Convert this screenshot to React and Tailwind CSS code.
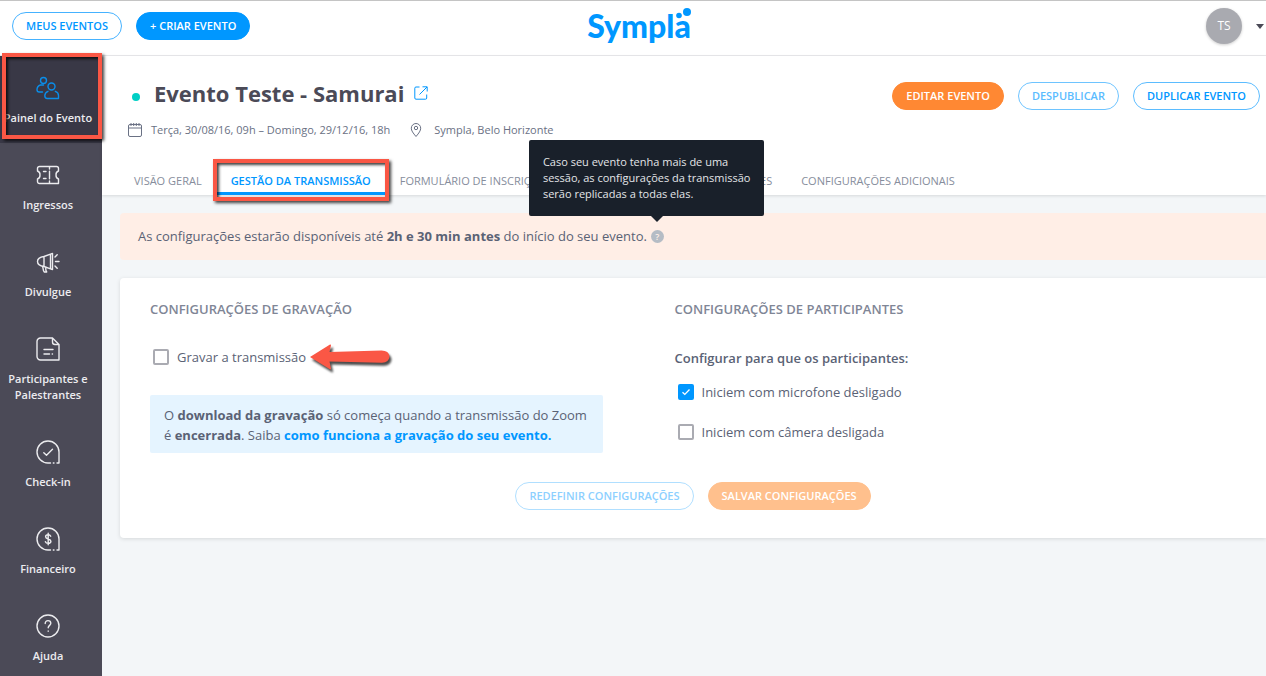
import React, { useState } from 'react';

const navItems = [
  { label: 'Painel do Evento', icon: PeopleIcon, active: true },
  { label: 'Ingressos', icon: TicketIcon },
  { label: 'Divulgue', icon: MegaphoneIcon },
  { label: 'Participantes e Palestrantes', icon: NoteIcon },
  { label: 'Check-in', icon: CheckinIcon },
  { label: 'Financeiro', icon: MoneyIcon },
  { label: 'Ajuda', icon: HelpIcon },
];

function NavSvg({ children }) {
  return (
    <svg width="24" height="24" viewBox="0 0 24 24" fill="none" stroke="currentColor" strokeWidth="1.4" strokeLinecap="round" strokeLinejoin="round" aria-hidden="true">
      {children}
    </svg>
  );
}

function PeopleIcon() {
  return (
    <NavSvg>
      <circle cx="7.5" cy="4.500" r="3" />
      <path d="M6.500 16H3.200A2.200 2.200 0 0 1 1 13.800C1 11.500 2.200 9.600 4.500 9h3" />
      <circle cx="15.500" cy="10.500" r="3.500" />
      <path d="M12 15.300c-2 .7-3.200 2.300-3.200 4.500 0 1.500.9 2.700 2.400 2.700h11.300v-3c0-2-1.200-3.500-3.200-4.200" />
    </NavSvg>
  );
}

function TicketIcon() {
  return (
    <NavSvg>
      <path d="M3.500 3.500h17a2 2 0 0 1 2 2V8a4 4 0 0 0-2.500 4 4 4 0 0 0 2.500 4v4.500h-19a2 2 0 0 1-2-2V16A4 4 0 0 0 4 12a4 4 0 0 0-2.500-4V5.500a2 2 0 0 1 2-2z" />
      <path d="M13.500 4v2M13.500 8.200v7.600M13.500 18v2M7.500 8.500H10M7.500 15.500H10" />
    </NavSvg>
  );
}

function MegaphoneIcon() {
  return (
    <NavSvg>
      <path d="M8 6.500C4.500 7 1.500 9 1.500 11.500S4.500 16 8 16.500zM8 6.500l6.500-2.300v14.600L8 16.500M14.500 4.200l2-.7v16l-2-.7" />
      <path d="M6.500 16.500c1 1.500.2 4 1.800 5.500h2.400c-.9-1.300-1.200-3-.7-4.600M19 7l2.200-2.200M19.500 11.500H23M19 16l2.200 2.200" />
    </NavSvg>
  );
}

function NoteIcon() {
  return (
    <NavSvg>
      <path d="M16.500 1h-12A3.500 3.500 0 0 0 1 4.500v15A3.500 3.500 0 0 0 4.500 23H23V7.500zM16.500 1v4a2.500 2.500 0 0 0 2.500 2.500h4" />
      <path d="M8 12.500h9M8 17h5.500M16.200 17h.3" />
    </NavSvg>
  );
}

function CheckinIcon() {
  return (
    <NavSvg>
      <path d="M14.500 23H12A11 11 0 1 1 23 12v11h-2M17.300 23h.7M7.800 12.700l2.700 2.500 6-6" />
    </NavSvg>
  );
}

function MoneyIcon() {
  return (
    <NavSvg>
      <path d="M14.500 23H12A11 11 0 1 1 23 12v11h-2M17.300 23h.7" />
      <path d="M14.700 9.300c-.4-1-1.300-1.500-2.500-1.500-1.500 0-2.600.7-2.600 2 0 2.900 5.300 1.500 5.300 4.500 0 1.300-1.200 2.100-2.700 2.100-1.400 0-2.400-.6-2.800-1.700M12.200 6.300v11.500" />
    </NavSvg>
  );
}

function HelpIcon() {
  return (
    <NavSvg>
      <circle cx="12" cy="12" r="11" />
      <path d="M9.200 9.500c0-1.800 1.200-2.900 2.800-2.900s2.800 1 2.800 2.700c0 2-2.600 2.200-2.600 4.500M12.200 17v.3" />
    </NavSvg>
  );
}

function CalendarIcon() {
  return (
    <svg width="16" height="16" viewBox="0 0 16 16" fill="none" stroke="currentColor" aria-hidden="true">
      <rect x="1.500" y="2.500" width="13" height="12" rx="1.500" />
      <path d="M1.500 6h13M4 1v3M6.700 1v3M9.300 1v3M12 1v3" />
    </svg>
  );
}

function PinIcon() {
  return (
    <svg width="12" height="16" viewBox="0 0 12 16" fill="none" stroke="currentColor" aria-hidden="true">
      <path d="M6 14.500C3 11 1.300 8.600 1.300 6.200a4.700 4.700 0 0 1 9.400 0C10.700 8.600 9 11 6 14.500z" />
      <circle cx="6" cy="6" r="1.700" />
    </svg>
  );
}

function ExternalIcon() {
  return (
    <svg width="14" height="14" viewBox="0 0 14 14" fill="none" stroke="currentColor" aria-hidden="true">
      <path d="M5.500 1H2a1.200 1.200 0 0 0-1.200 1.200V12A1.200 1.200 0 0 0 2 13.200h9.500a1.200 1.200 0 0 0 1.200-1.200V8.500M5.500 8.500L13 1M8.500.8h4.700v4.700" />
    </svg>
  );
}

function Highlight({ className }) {
  return (
    <span
      className={`pointer-events-none absolute border-4 border-[#fa5745] shadow-[2px_2px_3px_rgba(0,0,0,0.75),inset_2px_2px_3px_rgba(0,0,0,0.75)] ${className}`}
      aria-hidden="true"
    />
  );
}

function Arrow() {
  return (
    <svg className="drop-shadow-[2px_3px_1px_rgba(0,0,0,0.7)]" width="80" height="26" viewBox="0 0 80 26" aria-hidden="true">
      <path d="M0 13L20 .5Q21 0 21 1.500L19.500 8l52-1.500Q79 6.500 79.500 12.500 79 18.500 72 18.800L19.500 17.500 21 24.500Q21 26 19.500 25z" fill="#fa5745" />
    </svg>
  );
}

function Checkbox({ id, label, defaultChecked = false }) {
  const [checked, setChecked] = useState(defaultChecked);

  return (
    <div className="flex h-5 items-center gap-2">
      <span className="grid size-4 place-items-center">
        <input
          id={id}
          type="checkbox"
          checked={checked}
          onChange={e => setChecked(e.target.checked)}
          className="col-start-1 row-start-1 size-4 appearance-none rounded-xs border-2 border-[#aaabb2] bg-white checked:border-[#0097ff] checked:bg-[#0097ff]"
        />
        {checked && (
          <svg className="pointer-events-none col-start-1 row-start-1" width="8" height="8" viewBox="0 0 8 8" fill="none" stroke="#fff" strokeWidth="1.300" aria-hidden="true">
            <path d="M.5 4.200l2.300 2.200L7.500 1.500" />
          </svg>
        )}
      </span>
      <label htmlFor={id}>{label}</label>
    </div>
  );
}

const pill = 'h-7 shrink-0 rounded-full border px-[13px] text-[11px] font-semibold whitespace-nowrap';

export default function App() {
  return (
    <div className="flex min-h-screen flex-col bg-[#f3f6f8] font-['Open_Sans',sans-serif] text-[#5a6275]">
      {/* Top bar */}
      <header className="grid h-[56px] grid-cols-[1fr_auto_1fr] items-center border-t border-b border-t-[#c4c4c4] border-b-[#e9e9ec] bg-white pb-1 pl-3">
        <div className="flex gap-3.5">
          <button className={`${pill} border-[#45b2ff] text-[#0097ff]`}>MEUS EVENTOS</button>
          <button className={`${pill} border-[#0097ff] bg-[#0097ff] text-white`}>+ CRIAR EVENTO</button>
        </div>
        <a href="#" className="relative font-['Lato',sans-serif] text-[32px] leading-10 font-black text-[#0097ff]">
          Sympla
          <svg className="absolute top-0.5 right-0" width="16" height="11" viewBox="0 0 16 11" fill="currentColor" aria-hidden="true">
            <circle cx="4" cy="7.500" r="2.800" />
            <circle cx="12" cy="4" r="4" />
          </svg>
        </a>
        <button className="flex items-center gap-3.5 justify-self-end pr-0.5" aria-label="Conta">
          <span className="flex size-9 items-center justify-center rounded-full bg-[#a9aab0] text-xs text-white shadow-[0_1px_3px_rgba(0,0,0,0.2)]">TS</span>
          <svg width="8" height="5" viewBox="0 0 8 5" fill="#4b4a57" aria-hidden="true">
            <path d="M0 0h8L4 5z" />
          </svg>
        </button>
      </header>

      <div className="flex flex-1">
        {/* Sidebar */}
        <nav className="w-[102px] shrink-0 bg-[#4b4a57] text-[11px] leading-4 font-semibold text-[#ececef]">
          {navItems.map(({ label, icon: Icon, active }) => (
            <a
              key={label}
              href="#"
              className={`relative flex flex-col items-center gap-2.5 pt-5 pr-2 pb-[17px] pl-0.5 text-center ${active ? 'bg-[#393846]' : ''}`}
            >
              <span className={active ? 'text-[#0a8eea]' : ''}><Icon /></span>
              <span className={active ? 'whitespace-nowrap' : ''}>{label}</span>
              {active && <Highlight className="-top-[3px] right-0 bottom-1 left-0.5" />}
            </a>
          ))}
        </nav>

        <div className="min-w-0 flex-1">
          {/* Event header */}
          <section className="bg-white pt-5 shadow-[0_1px_3px_rgba(0,0,0,0.12)]">
            <div className="flex items-center justify-between pr-1.5 pl-[30px]">
              <div className="flex items-center">
                <span className="mt-2 size-2 rounded-full bg-[#00cfc5]" />
                <h1 className="ml-3.5 text-[22px] leading-7 font-bold text-[#4b4a57]">Evento Teste - Samurai</h1>
                <a href="#" className="ml-2.5 text-[#0097ff]" aria-label="Abrir evento"><ExternalIcon /></a>
              </div>
              <div className="flex gap-3.5 pt-1.5">
                <button className={`${pill} border-[#ff8833] bg-[#ff8833] text-white`}>EDITAR EVENTO</button>
                <button className={`${pill} border-[#6ec4ff] text-[#5bbcff]`}>DESPUBLICAR</button>
                <button className={`${pill} border-[#5bbcff] text-[#0097ff]`}>DUPLICAR EVENTO</button>
              </div>
            </div>

            <div className="mt-2.5 flex items-center pl-[25px] text-[11px] leading-5 text-[#6a7184]">
              <CalendarIcon />
              <span className="ml-2">Terça, 30/08/16, 09h – Domingo, 29/12/16, 18h</span>
              <span className="ml-5"><PinIcon /></span>
              <span className="ml-3">Sympla, Belo Horizonte</span>
            </div>

            <div className="mt-[27px] flex h-7 gap-[29px] pl-8 text-[11px] leading-[27px] whitespace-nowrap text-[#868d9c]">
              <a href="#">VISÃO GERAL</a>
              <a href="#" className="relative font-semibold text-[#0097ff]">
                GESTÃO DA TRANSMISSÃO
                <span className="absolute -inset-x-3.5 bottom-0 h-[3px] bg-[#0097ff]" />
                <Highlight className="-inset-x-[18px] -top-2 -bottom-1.5" />
              </a>
              <a href="#">FORMULÁRIO DE INSCRIÇÃO</a>
              <a href="#" className="w-[197px] text-right">PARTICIPANTES</a>
              <a href="#">CONFIGURAÇÕES ADICIONAIS</a>
            </div>
          </section>

          <main className="pt-[18px] pl-[18px]">
            <div className="flex h-[47px] items-center rounded-l bg-[#ffeee6] pl-[18px] text-[13px]">
              <p>
                As configurações estarão disponíveis até <strong>2h e 30 min antes</strong> do início do seu evento.
              </p>
              <div className="relative ml-1">
                <button className="flex size-[13px] items-center justify-center rounded-full bg-[#b5bcc5] text-[9px] font-semibold text-[#ffeee6]" aria-describedby="dica">?</button>
                <div id="dica" role="tooltip" className="absolute -right-[100px] bottom-full mb-3.5 w-[235px] rounded-xs bg-[#19202a] py-3.5 pr-2 pl-3.5 text-[11px] leading-4 text-[#e3e5e8]">
                  Caso seu evento tenha mais de uma sessão, as configurações da transmissão serão replicadas a todas elas.
                </div>
                <svg className="absolute bottom-full left-1/2 mb-2 -translate-x-1/2" width="12" height="6" viewBox="0 0 12 6" fill="#19202a" aria-hidden="true">
                  <path d="M0 0h12L6 6z" />
                </svg>
              </div>
            </div>

            <form className="mt-[18px] rounded-l bg-white pt-[21px] pb-7 text-[13px] leading-5 shadow-[0_1px_4px_rgba(0,0,0,0.12)]">
              <div className="flex pl-[30px]">
                <section className="w-[47%] pr-[72px]">
                  <h2 className="font-semibold text-[#7f8696]">CONFIGURAÇÕES DE GRAVAÇÃO</h2>
                  <div className="mt-[25px] flex items-center gap-1 pl-[3px]">
                    <Checkbox id="gravar" label="Gravar a transmissão" />
                    <Arrow />
                  </div>
                  <div className="mt-[25px] rounded-xs bg-[#e5f4ff] px-3.5 pt-2.5 pb-2 leading-5">
                    <p>
                      O <strong>download da gravação</strong> só começa quando a transmissão do Zoom
                    </p>
                    <p>
                      é <strong>encerrada</strong>. Saiba{' '}
                      <a href="#" className="font-bold text-[#0097ff]">como funciona a gravação do seu evento.</a>
                    </p>
                  </div>
                </section>

                <section>
                  <h2 className="font-semibold text-[#7f8696]">CONFIGURAÇÕES DE PARTICIPANTES</h2>
                  <p className="mt-[29px] font-semibold">Configurar para que os participantes:</p>
                  <div className="mt-3.5 flex flex-col gap-5 pl-[3px]">
                    <Checkbox id="microfone" label="Iniciem com microfone desligado" defaultChecked />
                    <Checkbox id="camera" label="Iniciem com câmera desligada" />
                  </div>
                </section>
              </div>

              <div className="mt-[29px] flex justify-center gap-3.5">
                <button type="button" className={`${pill} border-[#b0dfff] text-[#8dd0ff]`}>REDEFINIR CONFIGURAÇÕES</button>
                <button type="button" className={`${pill} border-[#ffc08d] bg-[#ffc08d] text-white`}>SALVAR CONFIGURAÇÕES</button>
              </div>
            </form>
          </main>
        </div>
      </div>
    </div>
  );
}
